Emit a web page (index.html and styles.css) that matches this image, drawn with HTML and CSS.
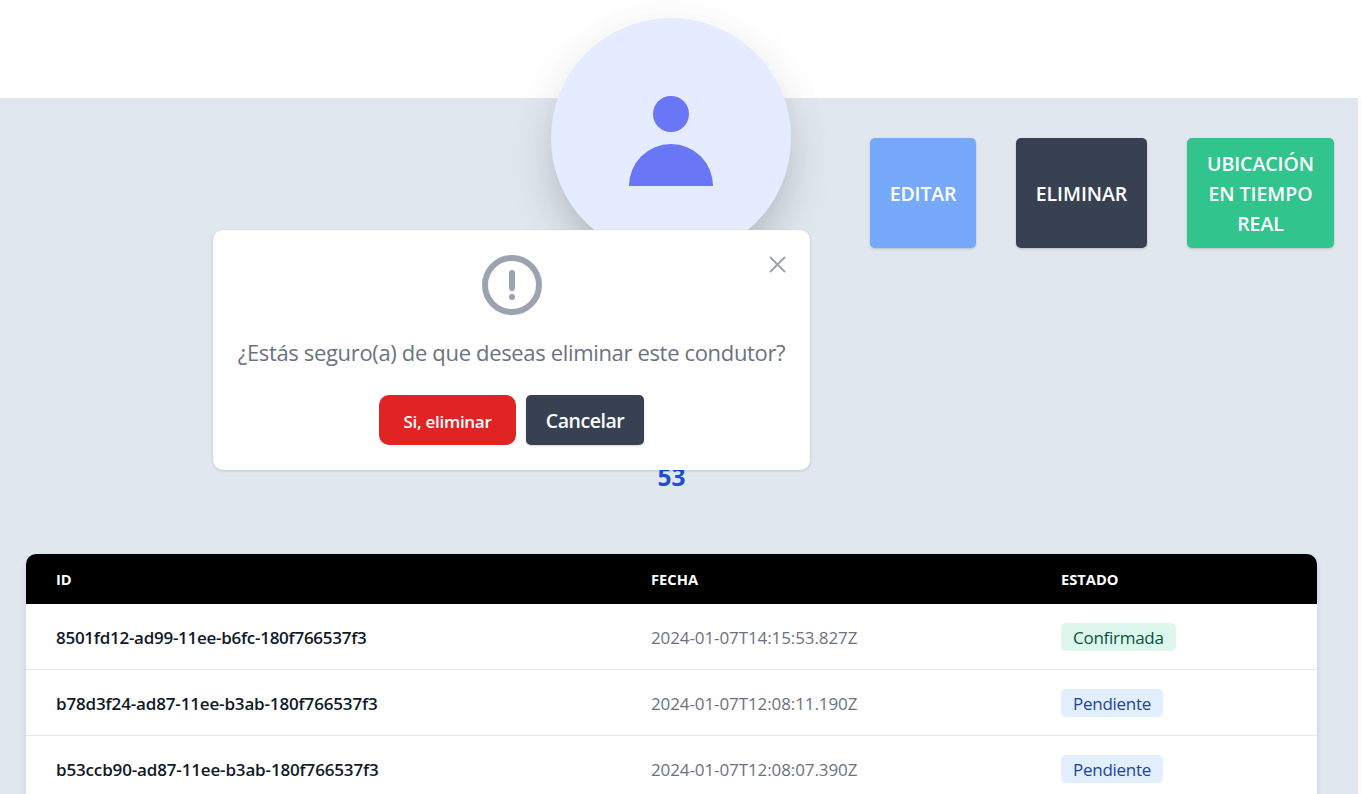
FILE: index.html
```html
<!DOCTYPE html>
<html lang="es">
<head>
<meta charset="utf-8">
<title>Conductor</title>
<link rel="stylesheet" href="styles.css">
</head>
<body>
<div class="page">
  <main class="profile">
    <section class="summary">
      <div class="avatar">
        <svg class="avatar-icon" width="84" height="90" viewBox="0 0 84 90" fill="currentColor"><circle cx="42" cy="18" r="18"/><path d="M0 90a42 42 0 0 1 84 0z"/></svg>
      </div>
      <div class="actions">
        <button class="btn btn-edit">EDITAR</button>
        <button class="btn btn-dark">ELIMINAR</button>
        <button class="btn btn-live">UBICACIÓN<br>EN TIEMPO<br>REAL</button>
      </div>
    </section>
    <p class="age">53</p>
    <div class="table">
      <div class="row head"><span>ID</span><span>FECHA</span><span>ESTADO</span></div>
      <div class="row"><span class="id id-narrow">8501fd12-ad99-11ee-b6fc-180f766537f3</span><span class="date">2024-01-07T14:15:53.827Z</span><span><span class="badge ok">Confirmada</span></span></div>
      <div class="row"><span class="id">b78d3f24-ad87-11ee-b3ab-180f766537f3</span><span class="date">2024-01-07T12:08:11.190Z</span><span><span class="badge wait">Pendiente</span></span></div>
      <div class="row"><span class="id">b53ccb90-ad87-11ee-b3ab-180f766537f3</span><span class="date">2024-01-07T12:08:07.390Z</span><span><span class="badge wait">Pendiente</span></span></div>
    </div>
  </main>
  <div class="modal">
    <svg class="alert" width="60" height="60" viewBox="0 0 60 60" fill="none" stroke="currentColor" stroke-width="6" stroke-linecap="round"><circle cx="30" cy="30" r="27"/><path d="M30 18v15M30 42h.03"/></svg>
    <button class="close" aria-label="Cerrar"><svg width="17" height="17" viewBox="0 0 17 17" fill="none" stroke="currentColor" stroke-width="2" stroke-linecap="round"><path d="M1.5 1.5l14 14M15.5 1.5l-14 14"/></svg></button>
    <p class="question">¿Estás seguro(a) de que deseas eliminar este condutor?</p>
    <div class="choices">
      <button class="confirm">Si, eliminar</button>
      <button class="btn btn-dark cancel">Cancelar</button>
    </div>
  </div>
</div>
</body>
</html>
```
FILE: styles.css
```css
* { box-sizing: border-box; }
body { margin: 0; background: #fff; font-family: "Open Sans", "Noto Sans", sans-serif; }
button { font-family: inherit; border: 0; margin: 0; }
.page { position: relative; width: 1362px; height: 794px; overflow: hidden; padding-top: 98px; background: #fff; }
.profile { width: 1358px; height: 696px; background: #e1e7ef; padding: 0 41px 0 26px; box-shadow: 4px 0 0 #fcfcfe; }
.summary { display: grid; grid-template-columns: 525px 240px 1fr; height: 320px; }
.avatar { grid-column: 2; width: 240px; height: 240px; margin-top: -80px; border-radius: 50%; background: #e5ecff; color: #6976f6; display: flex; justify-content: center; padding-top: 78px; box-shadow: 0 25px 50px -12px rgba(0,0,0,.25), 0 0 60px rgba(0,0,0,.03); }
.actions { display: flex; gap: 40px; padding: 40px 0 0 79px; width: 560px; height: 150px; }
.btn { border-radius: 5px; color: #fff; font-size: 19.5px; line-height: 30px; font-weight: 600; letter-spacing: -.05px; padding: 2px 0 0; white-space: nowrap; box-shadow: 0 1px 3px rgba(0,0,0,.1), 0 1px 2px rgba(0,0,0,.08); }
.btn-edit { width: 106px; background: #76a9fa; letter-spacing: -.15px; }
.btn-dark { width: 131px; background: #374151; }
.btn-live { width: 147px; background: #31c48d; }
.age { margin: 40px 0 0; text-align: center; font-size: 24.5px; line-height: 38px; font-weight: 700; color: #1d4ed8; }
.table { margin-top: 58px; height: 260px; border-radius: 10px; overflow: hidden; background: #fff; box-shadow: 0 4px 6px rgba(0,0,0,.1); }
.row { display: grid; grid-template-columns: 595px 410px 1fr; padding: 1px 0 0 30px; height: 66px; align-items: center; border-bottom: 1px solid #e5e7eb; font-size: 17px; line-height: 27px; color: #6b7280; }
.head { height: 50px; padding-top: 0; line-height: 24px; background: #000; color: #fff; font-size: 14.7px; font-weight: 700; border: 0; }
.id { font-weight: 600; color: #111827; letter-spacing: -.15px; }
.id-narrow { letter-spacing: -.272px; }
.date { letter-spacing: -.1px; }
.badge { display: block; width: max-content; height: 28px; margin-top: -1px; line-height: 30px; padding: 0 12px; border-radius: 5px; letter-spacing: -.27px; }
.ok { background: #def7ec; color: #03543f; }
.wait { background: #e1effe; color: #1e429f; }
.modal { position: absolute; left: 213px; top: 230px; width: 597px; height: 240px; background: #fff; border-radius: 10px; padding-top: 25px; display: flex; flex-direction: column; align-items: center; box-shadow: 0 1px 3px rgba(0,0,0,.15); }
.alert { color: #9ca3af; }
.close { position: absolute; right: 24px; top: 26px; padding: 0; background: none; color: #9ca3af; line-height: 0; }
.question { margin: 20px 0 0; font-size: 22px; line-height: 35px; color: #6b7280; white-space: nowrap; letter-spacing: -.34px; }
.choices { display: flex; gap: 10px; margin-top: 25px; height: 50px; }
.confirm { width: 137px; border-radius: 10px; background: #e02424; color: #fff; font-size: 17px; font-weight: 600; padding: 2px 0 0; letter-spacing: -.28px; }
.cancel { width: 118px; letter-spacing: -.45px; }
```
